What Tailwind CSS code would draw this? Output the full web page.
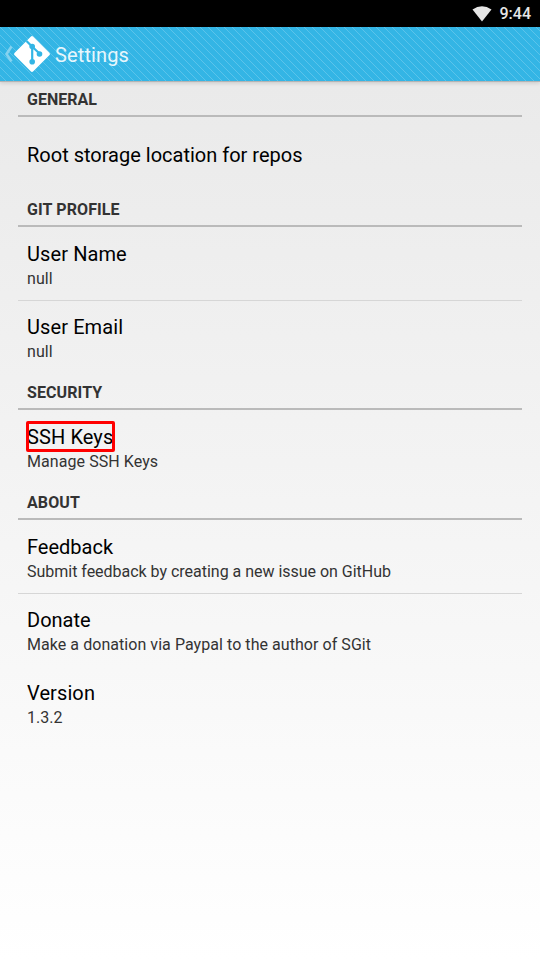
<!DOCTYPE html>
<html lang="en">
<head>
<meta charset="utf-8">
<title>Settings</title>
<script src="https://cdn.jsdelivr.net/npm/@tailwindcss/browser@4"></script>
</head>
<body class="flex h-[960px] w-[540px] flex-col overflow-hidden bg-linear-to-b from-[#e8e8e8] to-white font-[Roboto,sans-serif] text-black">
<div class="flex h-[27px] shrink-0 items-center justify-end gap-2 bg-black pr-[9px] text-[#e6e6e6]">
  <svg class="h-[16px] w-[20px]" viewBox="0 0 20 16" fill="currentColor"><path d="M.5 3.5Q10-3 19.500 3.500L10 15.500Z"/></svg>
  <span class="text-[16px] leading-[27px] font-medium">9:44</span>
</div>
<header class="relative z-10 flex h-[54px] shrink-0 items-center bg-[#33b5e5] shadow-[0_1px_0_#b4b4b4,0_2px_4px_rgba(0,0,0,0.15)]">
  <svg class="absolute inset-0 h-full w-full" shape-rendering="crispEdges">
    <defs><pattern id="stripe" width="8" height="8" patternUnits="userSpaceOnUse"><path d="M0 0h1v1h1v1h1v1h1v1h1v1h1v1h1v1h1v1h-1v-1h-1v-1h-1v-1h-1v-1h-1v-1h-1v-1h-1v-1h-1z" fill="#5bc3ea"/></pattern></defs>
    <rect width="100%" height="100%" fill="url(#stripe)"/>
  </svg>
  <svg class="relative ml-[4px] h-[18px] w-[9px]" viewBox="0 0 9 18" fill="none" stroke="#85d2ef" stroke-width="2.600"><path d="M7.500 1.500L2.500 9l5 7.500"/></svg>
  <svg class="relative ml-[1px] h-[36px] w-[36px]" viewBox="0 0 36 36">
    <path d="M16.700.7q1.300-1.300 2.600 0l16 16q1.300 1.300 0 2.600l-16 16q-1.300 1.300-2.600 0l-16-16q-1.300-1.300 0-2.600z" fill="white"/>
    <g stroke="#33b5e5" stroke-width="2.200" fill="#33b5e5"><path d="M12.500 5L18 10.500l8 7.500M18.200 10.500v15.500" fill="none"/><g stroke="none"><circle cx="18.200" cy="10.500" r="2.800"/><circle cx="25.500" cy="18" r="2.800"/><circle cx="18.200" cy="25.800" r="2.800"/></g></g>
  </svg>
  <h1 class="relative ml-[5px] pt-[2px] text-[20px] leading-6 tracking-[0.12px] text-[#e7f6fc]">Settings</h1>
</header>
<main class="px-[18px]">
  <h2 class="h-[36px] border-b-2 border-[#bababa] px-[9px] pt-[7px] text-[16px] leading-6 font-bold text-[#333]">GENERAL</h2>
  <div class="flex h-[74px] items-center px-[9px] pt-[2px] text-[20px] leading-6"><p>Root storage location for repos</p></div>
  <h2 class="h-[36px] border-b-2 border-[#bababa] px-[9px] pt-[7px] text-[16px] leading-6 font-bold tracking-[0.1px] text-[#333]">GIT PROFILE</h2>
  <div class="h-[74px] border-b border-[#d6d6d6] px-[9px] pt-[15px]"><p class="text-[20px] leading-6 tracking-[0.1px]">User Name</p><p class="pt-px text-[16px] leading-6 tracking-[0.1px] text-[#333]">null</p></div>
  <div class="h-[73px] px-[9px] pt-[14px]"><p class="text-[20px] leading-6 tracking-[0.1px]">User Email</p><p class="pt-px text-[16px] leading-6 tracking-[0.1px] text-[#333]">null</p></div>
  <h2 class="h-[36px] border-b-2 border-[#bababa] px-[9px] pt-[7px] text-[16px] leading-6 font-bold tracking-[0.1px] text-[#333]">SECURITY</h2>
  <div class="relative h-[74px] px-[9px] pt-[15px]"><p class="text-[20px] leading-6 tracking-[0.1px]">SSH Keys</p><p class="pt-px text-[16px] leading-6 tracking-[0.07px] text-[#333]">Manage SSH Keys</p><div class="absolute top-[11px] left-[8px] h-[31px] w-[89px] rounded-[2px] border-3 border-[#f00]"></div></div>
  <h2 class="h-[36px] border-b-2 border-[#bababa] px-[9px] pt-[7px] text-[16px] leading-6 font-bold tracking-[0.1px] text-[#333]">ABOUT</h2>
  <div class="h-[74px] border-b border-[#d6d6d6] px-[9px] pt-[15px]"><p class="text-[20px] leading-6">Feedback</p><p class="pt-px text-[16px] leading-6 tracking-[-0.02px] text-[#333]">Submit feedback by creating a new issue on GitHub</p></div>
  <div class="h-[73px] px-[9px] pt-[14px]"><p class="text-[20px] leading-6">Donate</p><p class="pt-px text-[16px] leading-6 tracking-[0.055px] text-[#333]">Make a donation via Paypal to the author of SGit</p></div>
  <div class="h-[73px] px-[9px] pt-[14px]"><p class="text-[20px] leading-6 tracking-[0.1px]">Version</p><p class="pt-px text-[16px] leading-6 text-[#333]">1.3.2</p></div>
</main>
</body>
</html>
